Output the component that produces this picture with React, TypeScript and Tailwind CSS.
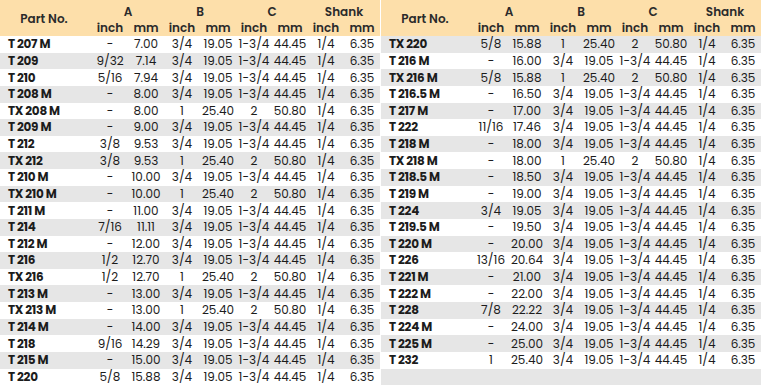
import React from "react";

type Row = [string, string, string, string];

// B/C values follow the B inch column: "1" rows are the TX series
const big = ["25.40", "2", "50.80"];
const std = ["19.05", "1-3/4", "44.45"];

const left: Row[] = [
  ["T 207 M", "-", "7.00", "3/4"],
  ["T 209", "9/32", "7.14", "3/4"],
  ["T 210", "5/16", "7.94", "3/4"],
  ["T 208 M", "-", "8.00", "3/4"],
  ["TX 208 M", "-", "8.00", "1"],
  ["T 209 M", "-", "9.00", "3/4"],
  ["T 212", "3/8", "9.53", "3/4"],
  ["TX 212", "3/8", "9.53", "1"],
  ["T 210 M", "-", "10.00", "3/4"],
  ["TX 210 M", "-", "10.00", "1"],
  ["T 211 M", "-", "11.00", "3/4"],
  ["T 214", "7/16", "11.11", "3/4"],
  ["T 212 M", "-", "12.00", "3/4"],
  ["T 216", "1/2", "12.70", "3/4"],
  ["TX 216", "1/2", "12.70", "1"],
  ["T 213 M", "-", "13.00", "3/4"],
  ["TX 213 M", "-", "13.00", "1"],
  ["T 214 M", "-", "14.00", "3/4"],
  ["T 218", "9/16", "14.29", "3/4"],
  ["T 215 M", "-", "15.00", "3/4"],
  ["T 220", "5/8", "15.88", "3/4"],
];

const right: Row[] = [
  ["TX 220", "5/8", "15.88", "1"],
  ["T 216 M", "-", "16.00", "3/4"],
  ["TX 216 M", "5/8", "15.88", "1"],
  ["T 216.5 M", "-", "16.50", "3/4"],
  ["T 217 M", "-", "17.00", "3/4"],
  ["T 222", "11/16", "17.46", "3/4"],
  ["T 218 M", "-", "18.00", "3/4"],
  ["TX 218 M", "-", "18.00", "1"],
  ["T 218.5 M", "-", "18.50", "3/4"],
  ["T 219 M", "-", "19.00", "3/4"],
  ["T 224", "3/4", "19.05", "3/4"],
  ["T 219.5 M", "-", "19.50", "3/4"],
  ["T 220 M", "-", "20.00", "3/4"],
  ["T 226", "13/16", "20.64", "3/4"],
  ["T 221 M", "-", "21.00", "3/4"],
  ["T 222 M", "-", "22.00", "3/4"],
  ["T 228", "7/8", "22.22", "3/4"],
  ["T 224 M", "-", "24.00", "3/4"],
  ["T 225 M", "-", "25.00", "3/4"],
  ["T 232", "1", "25.40", "3/4"],
];

const Cell = ({ children }: { children?: React.ReactNode }) => (
  <div className="w-[36px] shrink-0 text-center whitespace-nowrap">{children}</div>
);

const Table = ({ rows, greyFirst, filler }: { rows: Row[]; greyFirst: boolean; filler?: boolean }) => (
  <div className="w-[380px] flex flex-col">
    {/* header */}
    <div className="flex h-[36px] bg-[#fddfaa] text-[#2a2a2a] font-semibold text-[12px]">
      <div className="w-[92px] shrink-0 flex items-center justify-center pr-1 pt-[2px]">Part No.</div>
      {["A", "B", "C", "Shank"].map((g) => (
        <div key={g} className="flex flex-col">
          <div className="h-[18px] flex items-end justify-center leading-none">{g}</div>
          <div className="h-[18px] flex items-center leading-none pt-[1px]">
            <Cell>inch</Cell>
            <Cell>mm</Cell>
          </div>
        </div>
      ))}
    </div>
    {rows.map((r, i) => {
      const grey = (i % 2 === 0) === greyFirst;
      const bc = r[3] === "1" ? big : std;
      return (
        <div
          key={r[0] + i}
          className={`flex items-center h-[16.67px] leading-none text-[12px] text-[#1c1c1c] ${grey ? "bg-[#e6e6e6]" : "bg-white"}`}
        >
          <div className="w-[92px] shrink-0 pl-[8px] font-bold tracking-[-0.3px]">{r[0]}</div>
          <Cell>{r[1]}</Cell>
          <Cell>{r[2]}</Cell>
          <Cell>{r[3]}</Cell>
          <Cell>{bc[0]}</Cell>
          <Cell>{bc[1]}</Cell>
          <Cell>{bc[2]}</Cell>
          <Cell>1/4</Cell>
          <Cell>6.35</Cell>
        </div>
      );
    })}
    {filler && <div className="h-[16.67px] bg-[#e6e6e6]" />}
  </div>
);

export default function App() {
  return (
    <div
      className="w-[761px] h-[385px] overflow-hidden bg-white flex gap-[1px]"
      style={{ fontFamily: "'Poppins', Inter, 'Liberation Sans', sans-serif" }}
    >
      <Table rows={left} greyFirst={false} />
      <Table rows={right} greyFirst={true} filler />
    </div>
  );
}
